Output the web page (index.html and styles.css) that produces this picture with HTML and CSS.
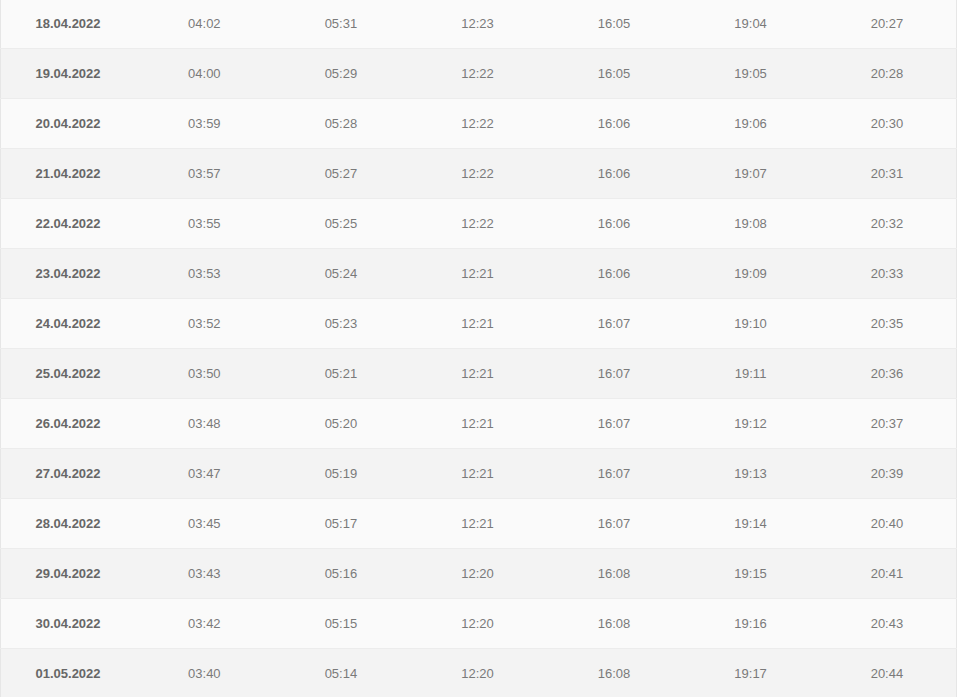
FILE: index.html
```html
<!DOCTYPE html>
<html>
<head>
<meta charset="utf-8">
<link rel="stylesheet" href="styles.css">
</head>
<body>
<table class="times">
<tbody>
<tr><td class="date">18.04.2022</td><td>04:02</td><td>05:31</td><td>12:23</td><td>16:05</td><td>19:04</td><td>20:27</td></tr>
<tr><td class="date">19.04.2022</td><td>04:00</td><td>05:29</td><td>12:22</td><td>16:05</td><td>19:05</td><td>20:28</td></tr>
<tr><td class="date">20.04.2022</td><td>03:59</td><td>05:28</td><td>12:22</td><td>16:06</td><td>19:06</td><td>20:30</td></tr>
<tr><td class="date">21.04.2022</td><td>03:57</td><td>05:27</td><td>12:22</td><td>16:06</td><td>19:07</td><td>20:31</td></tr>
<tr><td class="date">22.04.2022</td><td>03:55</td><td>05:25</td><td>12:22</td><td>16:06</td><td>19:08</td><td>20:32</td></tr>
<tr><td class="date">23.04.2022</td><td>03:53</td><td>05:24</td><td>12:21</td><td>16:06</td><td>19:09</td><td>20:33</td></tr>
<tr><td class="date">24.04.2022</td><td>03:52</td><td>05:23</td><td>12:21</td><td>16:07</td><td>19:10</td><td>20:35</td></tr>
<tr><td class="date">25.04.2022</td><td>03:50</td><td>05:21</td><td>12:21</td><td>16:07</td><td>19:11</td><td>20:36</td></tr>
<tr><td class="date">26.04.2022</td><td>03:48</td><td>05:20</td><td>12:21</td><td>16:07</td><td>19:12</td><td>20:37</td></tr>
<tr><td class="date">27.04.2022</td><td>03:47</td><td>05:19</td><td>12:21</td><td>16:07</td><td>19:13</td><td>20:39</td></tr>
<tr><td class="date">28.04.2022</td><td>03:45</td><td>05:17</td><td>12:21</td><td>16:07</td><td>19:14</td><td>20:40</td></tr>
<tr><td class="date">29.04.2022</td><td>03:43</td><td>05:16</td><td>12:20</td><td>16:08</td><td>19:15</td><td>20:41</td></tr>
<tr><td class="date">30.04.2022</td><td>03:42</td><td>05:15</td><td>12:20</td><td>16:08</td><td>19:16</td><td>20:43</td></tr>
<tr><td class="date">01.05.2022</td><td>03:40</td><td>05:14</td><td>12:20</td><td>16:08</td><td>19:17</td><td>20:44</td></tr>
</tbody>
</table>
</body>
</html>
```
FILE: styles.css
```css
html, body {
  margin: 0;
  padding: 0;
  background: #ffffff;
}
.times {
  width: 957px;
  margin-top: -2px;
  border-collapse: collapse;
  table-layout: fixed;
  border-left: 1px solid #e6e6e6;
  border-right: 1px solid #e6e6e6;
  font-family: "Liberation Sans", Arial, sans-serif;
  font-size: 13px;
  color: #7a7a7a;
}
.times tr {
  height: 50px;
  background: #fafafa;
  border-bottom: 1px solid #ececec;
}
.times tr:nth-child(even) {
  background: #f3f3f3;
}
.times td {
  padding: 1px 2px 0 0;
  text-align: center;
  vertical-align: middle;
}
.times td.date {
  font-weight: bold;
  color: #676767;
}
```
